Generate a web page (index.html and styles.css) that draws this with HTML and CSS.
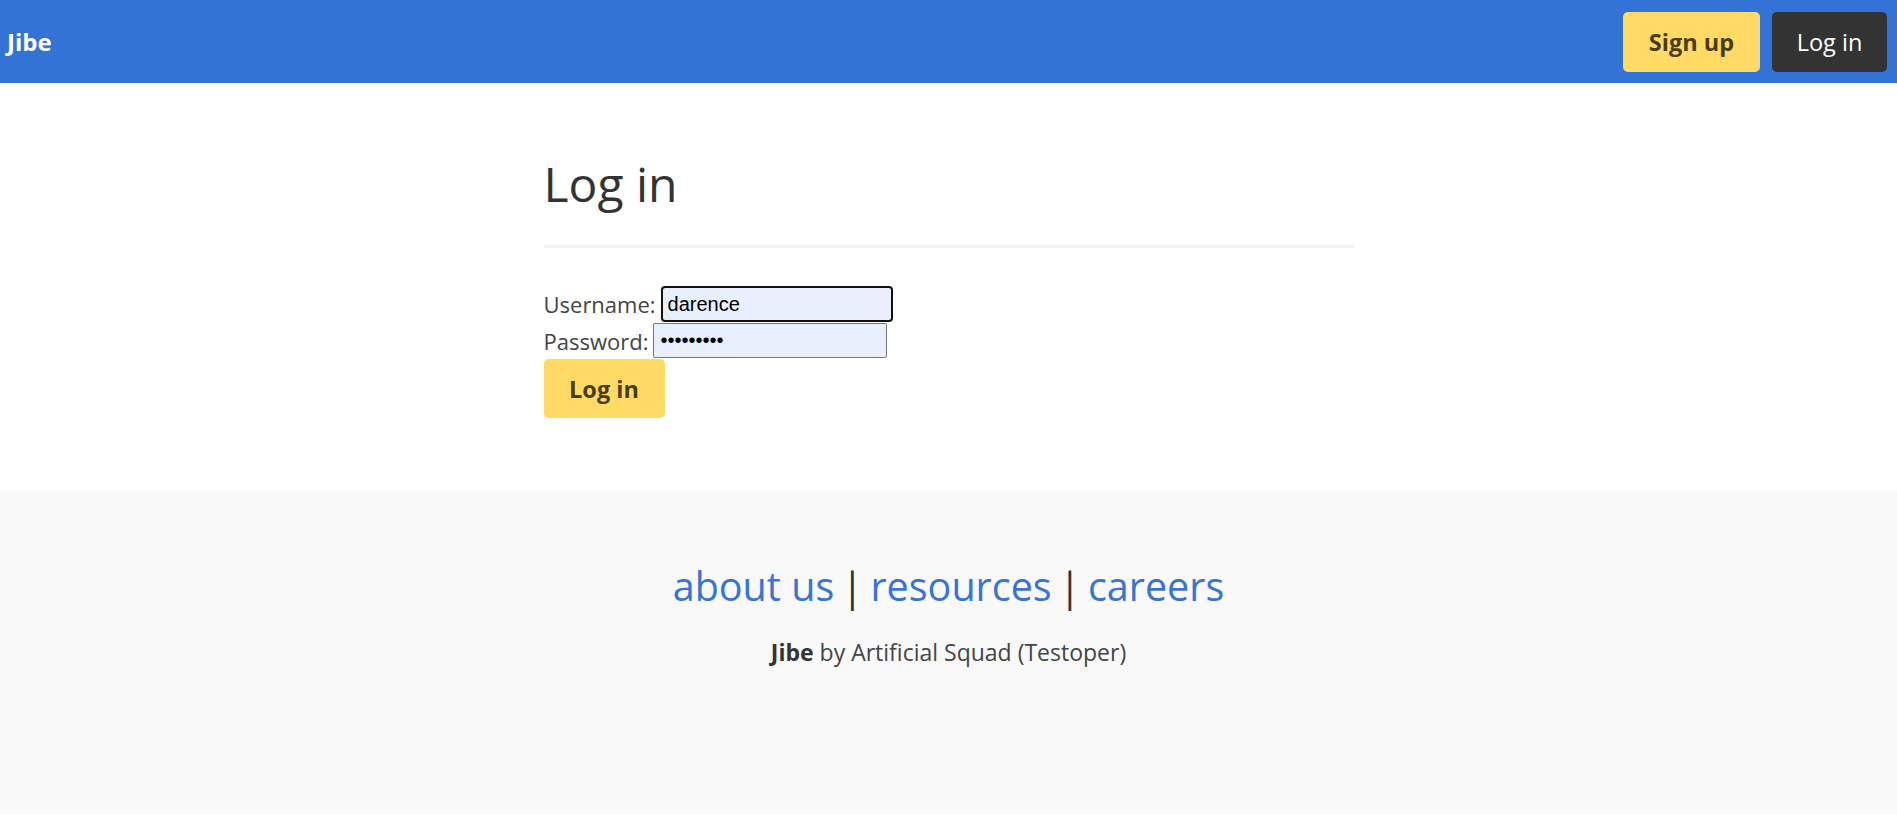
FILE: index.html
```html
<!DOCTYPE html>
<html lang="en">
<head>
<meta charset="utf-8">
<title>Jibe - Log in</title>
<link rel="stylesheet" href="styles.css">
</head>
<body>
<nav class="topbar">
  <a class="brand" href="#">Jibe</a>
  <div class="nav-actions">
    <a class="btn btn-yellow nav-signup" href="#">Sign up</a>
    <a class="btn btn-dark nav-login" href="#">Log in</a>
  </div>
</nav>
<main class="content">
  <h1 class="title">Log in</h1>
  <hr class="rule">
  <form class="login-form">
    <div class="field"><label for="u">Username:</label> <input id="u" class="inp inp-focus" type="text" value="darence"></div>
    <div class="field field-pw"><label for="p">Password:</label> <input id="p" class="inp" type="password" value="123456789"></div>
    <button class="btn btn-yellow submit" type="button">Log in</button>
  </form>
</main>
<footer class="footer">
  <p class="links"><a href="#">about us</a> | <a href="#">resources</a> | <a href="#">careers</a></p>
  <p class="credit"><b>Jibe</b> by Artificial Squad (Testoper)</p>
</footer>
</body>
</html>
```
FILE: styles.css
```css
html, body {
  margin: 0;
  padding: 0;
}
body {
  font-family: "Open Sans", "Noto Sans", sans-serif;
  color: #333;
  background: #fff;
  padding-bottom: 18px;
}
.topbar {
  height: 83px;
  background: #3473d6;
  display: flex;
  align-items: center;
  justify-content: space-between;
  padding: 0 10px 0 7px;
  box-sizing: border-box;
}
.brand {
  color: #fff;
  font-weight: 700;
  font-size: 24px;
  text-decoration: none;
}
.nav-actions {
  display: flex;
  gap: 12px;
  align-items: center;
}
.btn {
  display: flex;
  align-items: center;
  justify-content: center;
  box-sizing: border-box;
  border: none;
  border-radius: 5px;
  text-decoration: none;
  font-family: inherit;
  font-size: 23.5px;
}
.btn-yellow {
  background: #ffdb66;
  color: #4a3d14;
  font-weight: 700;
}
.btn-dark {
  background: #333;
  color: #fff;
}
.nav-signup {
  width: 137px;
  height: 60px;
}
.nav-login {
  width: 115px;
  height: 60px;
}
.content {
  width: 810px;
  margin: 0 auto;
  padding: 72px 0 73px;
  box-sizing: border-box;
}
.title {
  margin: 0;
  font-size: 48px;
  font-weight: 400;
  line-height: 58px;
}
.rule {
  border: none;
  height: 3px;
  background: #f2f2f2;
  margin: 32px 0 38px;
}
.login-form {
  font-size: 22px;
  color: #444;
}
.field {
  display: flex;
  align-items: center;
  gap: 5px;
  line-height: 30px;
}
.field-pw {
  margin-top: 1px;
}
.inp {
  box-sizing: border-box;
  width: 234px;
  height: 35px;
  background: #e8f0fe;
  border: 1px solid #767676;
  border-radius: 2px;
  font-family: "Liberation Sans", Arial, sans-serif;
  font-size: 20px;
  color: #000;
  padding: 0 6px;
}
.inp-focus {
  width: 232px;
  height: 36px;
  border: 2px solid #111;
  border-radius: 4px;
  padding: 0 5px;
  outline: none;
}
.submit {
  width: 121px;
  height: 59px;
  margin-top: 1px;
}
.footer {
  background: #f9f9f9;
  height: 323px;
  text-align: center;
  padding-top: 1px;
  box-sizing: border-box;
}
.links {
  margin: 67px 0 0;
  font-size: 39.5px;
  line-height: 54px;
  color: #333;
  word-spacing: -3px;
}
.links a {
  color: #3873d6;
  text-decoration: none;
  word-spacing: 0;
}
.credit {
  margin: 23px 0 0;
  font-size: 23px;
  line-height: 32px;
  color: #444;
}
.credit b {
  color: #333;
}
```
